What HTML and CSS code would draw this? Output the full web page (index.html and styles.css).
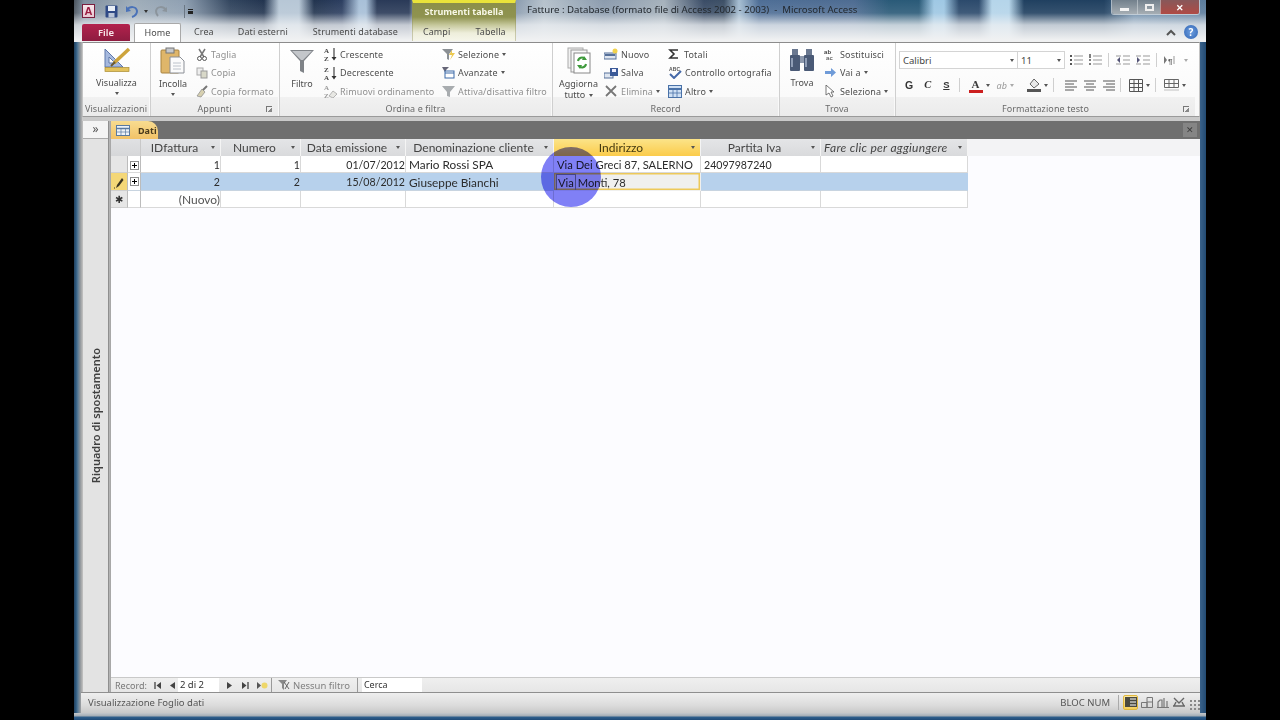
FILE: index.html
```html
<!DOCTYPE html>
<html lang="it">
<head>
<meta charset="utf-8">
<title>Fatture : Database - Microsoft Access</title>
<link rel="stylesheet" href="styles.css">
</head>
<body>
<div class="window">
  <div class="chrome">
    <div class="context-strip"><span class="context-title">Strumenti tabella</span></div>
    <div class="titlebar">
      <div class="qat">
        <span class="app-a">A</span>
        <svg class="qi q-save" width="13" height="13" viewBox="0 0 13 13"><rect x="0.5" y="0.5" width="12" height="12" rx="1" fill="#2f4a86"/><rect x="3" y="1" width="7" height="5" fill="#e8eef6"/><rect x="3.500" y="8" width="6" height="4.500" fill="#b9c4d6"/></svg>
        <svg class="qi q-undo" width="14" height="13" viewBox="0 0 14 13"><path d="M2 5 C5 1 11 1 12 6 C12 9 10 11 7 12" fill="none" stroke="#4a72b8" stroke-width="2"/><path d="M1 1 L1 7 L6 6 Z" fill="#4a72b8"/></svg>
        <span class="q-caret"></span>
        <svg class="qi q-redo" width="14" height="13" viewBox="0 0 14 13"><path d="M12 5 C9 1 3 1 2 6 C2 8 3 10 4 11" fill="none" stroke="#8b949c" stroke-width="2"/><path d="M13 2 L13 7 L8 6 Z" fill="#8b949c"/></svg>
        <span class="q-sep"></span>
        <span class="q-more"></span>
      </div>
      <span class="doc-title">Fatture : Database (formato file di Access 2002 - 2003)&nbsp; -&nbsp; Microsoft Access</span>
      <div class="winbtns">
        <span class="wb wb-min"><i></i></span>
        <span class="wb wb-max"><i></i></span>
        <span class="wb wb-close">✕</span>
      </div>
    </div>
    <div class="tabs">
      <span class="tab-file">File</span>
      <span class="tab tab-home">Home</span>
      <span class="tab t-crea">Crea</span>
      <span class="tab t-est">Dati esterni</span>
      <span class="tab t-str">Strumenti database</span>
      <span class="tab t-cam">Campi</span>
      <span class="tab t-tab">Tabella</span>
      <span class="tab-right">
        <svg width="10" height="7" viewBox="0 0 10 7"><path d="M1 6 L5 2 L9 6" fill="none" stroke="#555" stroke-width="2"/></svg>
        <span class="help">?</span>
      </span>
    </div>
  </div>

  <div class="ribbon">
    <section class="group g-vis">
      <div class="g-body">
        <div class="large lg-vis">
          <svg width="28" height="26" viewBox="0 0 28 26"><path d="M2 2 L2 20 L20 20 Z M6 10 L6 16 L12 16 Z" fill="#a6b9de" fill-rule="evenodd" stroke="#5f78ab"/><path d="M26 2 L11 16" stroke="#cda43c" stroke-width="3.500"/><path d="M12 15 L8 19" stroke="#6b5a30" stroke-width="2"/><rect x="2" y="20.500" width="24" height="4" fill="#e3c25c" stroke="#a98b2f" stroke-width=".7"/></svg>
          <span class="lg-label">Visualizza</span>
          <span class="caret"></span>
        </div>
      </div>
      <div class="g-label">Visualizzazioni</div>
    </section>

    <section class="group g-app">
      <div class="g-body">
        <div class="large lg-inc">
          <svg width="26" height="27" viewBox="0 0 26 27"><rect x="1" y="3" width="18" height="23" rx="1" fill="#dfb66a" stroke="#a88340"/><rect x="6" y="1" width="8" height="5" fill="#c7c9cc" stroke="#777"/><path d="M10 10 H20 L24 14 V26 H10 Z" fill="#fbfbfb" stroke="#8b8f96"/><path d="M13 16 H21 M13 19 H21 M13 22 H21" stroke="#bcc2ca"/></svg>
          <span class="lg-label">Incolla</span>
          <span class="caret"></span>
        </div>
        <div class="col c-app">
          <div class="sm dis"><svg width="12" height="13" viewBox="0 0 12 13"><path d="M3 1 L8 9 M9 1 L4 9" stroke="#777" stroke-width="1.500"/><circle cx="3.500" cy="10.500" r="2" fill="none" stroke="#555"/><circle cx="8.500" cy="10.500" r="2" fill="none" stroke="#555"/></svg><span>Taglia</span></div>
          <div class="sm dis"><svg width="12" height="13" viewBox="0 0 12 13"><rect x="1" y="2" width="6" height="7" fill="#eee" stroke="#aaa"/><rect x="5" y="5" width="6" height="7" fill="#d8d8c8" stroke="#999"/></svg><span>Copia</span></div>
          <div class="sm dis"><svg width="12" height="13" viewBox="0 0 12 13"><path d="M11 1 L6 6" stroke="#777" stroke-width="2"/><path d="M6 4 L9 7 L5 12 L1 11 Z" fill="#d7d0b0" stroke="#888" stroke-width=".7"/></svg><span>Copia formato</span></div>
        </div>
      </div>
      <div class="g-label g-label-launch"><span>Appunti</span><i class="launch"></i></div>
    </section>

    <section class="group g-ord">
      <div class="g-body">
        <div class="large lg-fil">
          <svg width="26" height="26" viewBox="0 0 26 26"><path d="M1 2 H25 L15 13 V25 L11 23 V13 Z" fill="#7f8388"/><path d="M3 3 H23 L14 12 H12 Z" fill="#c3c6ca"/></svg>
          <span class="lg-label">Filtro</span>
        </div>
        <div class="col c-ord1">
          <div class="sm"><svg width="13" height="14" viewBox="0 0 13 14"><text x="0" y="6" class="az">A</text><text x="0" y="13.500" class="az">Z</text><path d="M10 1 V11" stroke="#444" stroke-width="1.200"/><path d="M7.500 10 H12.500 L10 13.500 Z" fill="#333"/></svg><span>Crescente</span></div>
          <div class="sm"><svg width="13" height="14" viewBox="0 0 13 14"><text x="0" y="6" class="az">Z</text><text x="0" y="13.500" class="az">A</text><path d="M10 1 V11" stroke="#444" stroke-width="1.200"/><path d="M7.500 10 H12.500 L10 13.500 Z" fill="#333"/></svg><span>Decrescente</span></div>
          <div class="sm dis"><svg width="13" height="14" viewBox="0 0 13 14"><text x="0" y="6" class="az az-d">A</text><text x="0" y="13.500" class="az az-d">Z</text><path d="M5 12 L9 7 L13 10 L9 14 Z" fill="#e8e8e4" stroke="#999" stroke-width=".7"/></svg><span>Rimuovi ordinamento</span></div>
        </div>
        <div class="col c-ord2">
          <div class="sm"><svg width="13" height="13" viewBox="0 0 13 13"><path d="M0 1 H11 L7 6 V12 L5 11 V6 Z" fill="#8b9094"/><path d="M10 2 L7 7 H10 L8 12 L13 5 H10 Z" fill="#ecc94f"/></svg><span>Selezione</span><b class="dd"></b></div>
          <div class="sm"><svg width="13" height="13" viewBox="0 0 13 13"><path d="M0 1 H7 L4 4 V8 Z" fill="#667"/><rect x="3" y="5" width="9" height="7" fill="#fff" stroke="#3c6aa8"/><path d="M3 7 H12" stroke="#3c6aa8"/></svg><span>Avanzate</span><b class="dd"></b></div>
          <div class="sm dis"><svg width="13" height="13" viewBox="0 0 13 13"><path d="M0 1 H13 L8 7 V12 L5 11 V7 Z" fill="#a8acaf"/></svg><span>Attiva/disattiva filtro</span></div>
        </div>
      </div>
      <div class="g-label">Ordina e filtra</div>
    </section>

    <section class="group g-rec">
      <div class="g-body">
        <div class="large lg-agg">
          <svg width="24" height="28" viewBox="0 0 24 28"><rect x="1" y="1" width="15" height="20" fill="#f1f1f1" stroke="#aaa"/><rect x="4" y="3" width="16" height="22" fill="#f7f7f7" stroke="#999"/><rect x="7" y="6" width="16" height="20" fill="#fff" stroke="#888"/><path d="M11 14 A4 4 0 0 1 18 12 M19 17 A4 4 0 0 1 12 19" fill="none" stroke="#3f9a3c" stroke-width="2"/><path d="M17 9 L20 13 L15 13 Z M13 22 L10 18 L15 18 Z" fill="#3f9a3c"/></svg>
          <span class="lg-label lg-two">Aggiorna<br>tutto <b class="dd dd-in"></b></span>
        </div>
        <div class="col c-rec1">
          <div class="sm"><svg width="14" height="12" viewBox="0 0 14 12"><rect x="0" y="5" width="12" height="6" fill="#dfe6f0" stroke="#56709a"/><path d="M1 7 H11" stroke="#56709a" stroke-width="2"/><circle cx="11" cy="3" r="2.500" fill="#f2d24c"/></svg><span>Nuovo</span></div>
          <div class="sm"><svg width="14" height="12" viewBox="0 0 14 12"><rect x="0" y="6" width="9" height="5" fill="#dfe6f0" stroke="#56709a"/><rect x="6" y="1" width="8" height="8" fill="#3a5a98"/><rect x="8" y="2" width="4" height="3" fill="#eef"/></svg><span>Salva</span></div>
          <div class="sm dis"><svg width="14" height="12" viewBox="0 0 14 12"><path d="M2 1 L12 11 M12 1 L2 11" stroke="#777" stroke-width="1.800"/></svg><span>Elimina</span><b class="dd"></b></div>
        </div>
        <div class="col c-rec2">
          <div class="sm"><svg width="12" height="12" viewBox="0 0 12 12"><path d="M10 2 H2 L6 6 L2 10 H10" fill="none" stroke="#333" stroke-width="1.600"/></svg><span>Totali</span></div>
          <div class="sm"><svg width="14" height="13" viewBox="0 0 14 13"><text x="1" y="5" class="abc">ABC</text><path d="M2 8 L6 12 L13 5" fill="none" stroke="#4468a8" stroke-width="2"/></svg><span>Controllo ortografia</span></div>
          <div class="sm"><svg width="14" height="13" viewBox="0 0 14 13"><rect x="0.500" y="0.500" width="13" height="12" fill="#cfe0f4" stroke="#4a72a8"/><path d="M0 4 H14" stroke="#4a72a8" stroke-width="2"/><path d="M0 8 H14 M5 4 V13 M9 4 V13" stroke="#4a72a8" stroke-width=".8"/></svg><span>Altro</span><b class="dd"></b></div>
        </div>
      </div>
      <div class="g-label">Record</div>
    </section>

    <section class="group g-tro">
      <div class="g-body">
        <div class="large lg-tro">
          <svg width="26" height="26" viewBox="0 0 26 26"><rect x="3" y="2" width="6" height="6" fill="#6a7890"/><rect x="17" y="2" width="6" height="6" fill="#6a7890"/><rect x="1" y="8" width="10" height="16" rx="1" fill="#4a5a76"/><rect x="15" y="8" width="10" height="16" rx="1" fill="#4a5a76"/><rect x="11" y="9" width="4" height="7" fill="#8d99ad"/><path d="M3 11 V20 M17 11 V20" stroke="#a8b5cb" stroke-width="1.500"/></svg>
          <span class="lg-label">Trova</span>
        </div>
        <div class="col c-tro">
          <div class="sm"><svg width="13" height="13" viewBox="0 0 13 13"><text x="0" y="5.500" class="rep">ab</text><text x="2" y="12" class="rep rep2">ac</text></svg><span>Sostituisci</span></div>
          <div class="sm"><svg width="13" height="13" viewBox="0 0 13 13"><path d="M1 5 H7 V2 L12 6.500 L7 11 V8 H1 Z" fill="#6f9bd8"/></svg><span>Vai a</span><b class="dd"></b></div>
          <div class="sm"><svg width="13" height="13" viewBox="0 0 13 13"><path d="M2 0 V10 L5 8 L7 12 L9 11 L7 7 L10 7 Z" fill="#fff" stroke="#555" stroke-width=".8"/></svg><span>Seleziona</span><b class="dd"></b></div>
        </div>
      </div>
      <div class="g-label">Trova</div>
    </section>

    <section class="group g-font">
      <div class="g-body g-font-body">
        <div class="font-row fr1">
          <div class="combo c-name"><span>Calibri</span><b class="dd"></b></div>
          <div class="combo c-size"><span>11</span><b class="dd"></b></div>
          <svg class="fi fi1" width="13" height="12" viewBox="0 0 13 12"><path d="M4 2 H13 M4 6 H13 M4 10 H13" stroke="#999"/><path d="M0 2 H2 M0 6 H2 M0 10 H2" stroke="#555" stroke-width="2"/></svg>
          <svg class="fi" width="13" height="12" viewBox="0 0 13 12"><path d="M4 2 H13 M4 6 H13 M4 10 H13" stroke="#999"/><path d="M1 0 V4 M0 6 H2 M0 10 H2" stroke="#555" stroke-width="1.500"/></svg>
          <i class="vsep vs1"></i>
          <svg class="fi" width="14" height="12" viewBox="0 0 14 12"><path d="M7 2 H14 M7 6 H14 M7 10 H14 M0 2 H5 M0 10 H5" stroke="#999"/><path d="M4 3 L1 6 L4 9 Z" fill="#557"/></svg>
          <svg class="fi" width="14" height="12" viewBox="0 0 14 12"><path d="M7 2 H14 M7 6 H14 M7 10 H14 M0 2 H5 M0 10 H5" stroke="#999"/><path d="M1 3 L4 6 L1 9 Z" fill="#557"/></svg>
          <i class="vsep vs2"></i>
          <svg class="fi" width="12" height="10" viewBox="0 0 12 10"><path d="M0 1 L3 5 L0 9 Z" fill="#777"/><text x="4" y="8.500" class="para">¶</text><path d="M10 1 V9" stroke="#999"/></svg>
          <b class="dd dd-l dd-pil"></b>
        </div>
        <div class="font-row fr2">
          <span class="fmt f-g">G</span>
          <span class="fmt f-c">C</span>
          <span class="fmt f-s">S</span>
          <i class="vsep vs3"></i>
          <span class="fmt-a">A</span>
          <b class="dd"></b>
          <span class="fmt-ab">ab</span>
          <b class="dd dd-l"></b>
          <svg class="fill" width="14" height="14" viewBox="0 0 14 14"><path d="M3 6 L7 1 L12 6 L7 10 Z" fill="#e8e8e8" stroke="#666"/><rect x="0" y="11" width="14" height="3" fill="#555"/></svg>
          <b class="dd"></b>
          <i class="vsep vs4"></i>
          <svg class="al" width="12" height="11" viewBox="0 0 12 11"><path d="M0 1 H12 M0 4 H9 M0 7 H12 M0 10 H9" stroke="#555"/></svg>
          <svg class="al" width="12" height="11" viewBox="0 0 12 11"><path d="M0 1 H12 M2 4 H10 M0 7 H12 M2 10 H10" stroke="#555"/></svg>
          <svg class="al" width="12" height="11" viewBox="0 0 12 11"><path d="M0 1 H12 M3 4 H12 M0 7 H12 M3 10 H12" stroke="#555"/></svg>
          <i class="vsep vs5"></i>
          <svg class="gr" width="14" height="13" viewBox="0 0 14 13"><path d="M.5 .5 H13.500 V12.500 H.5 Z M.5 4.500 H13.500 M.5 8.500 H13.500 M5 .5 V12.500 M9.500 .5 V12.500" fill="none" stroke="#555"/></svg>
          <b class="dd"></b>
          <i class="vsep vs6"></i>
          <svg class="gr gr2" width="15" height="12" viewBox="0 0 15 12"><path d="M.5 .5 H14.500 V8.500 H.5 Z M.5 4.500 H14.500 M5 .5 V8.500 M10 .5 V8.500" fill="none" stroke="#666"/><rect y="10" width="15" height="2" fill="#ddd"/></svg>
          <b class="dd"></b>
        </div>
      </div>
      <div class="g-label g-label-launch"><span>Formattazione testo</span><i class="launch"></i></div>
    </section>
  </div>

  <div class="ribbon-gap"></div>

  <div class="workspace">
    <aside class="navpane">
      <div class="nav-toggle">»</div>
      <div class="nav-body"><span class="nav-text">Riquadro di spostamento</span></div>
    </aside>
    <main class="doc">
      <div class="doc-tabs">
        <div class="doc-tab">
          <svg width="14" height="11" viewBox="0 0 14 11"><rect x=".5" y=".5" width="13" height="10" fill="#eef3f9" stroke="#5a7aa0"/><path d="M0 3.500 H14" stroke="#5a7aa0" stroke-width="1.500"/><path d="M0 7 H14 M5 3 V11 M9.500 3 V11" stroke="#5a7aa0" stroke-width=".7"/></svg>
          <span>Dati</span>
        </div>
        <div class="doc-close">✕</div>
      </div>
      <div class="sheet">
        <table class="grid">
          <colgroup>
            <col class="w17"><col class="w13"><col class="w80"><col class="w80"><col class="w105"><col class="w148"><col class="w147"><col class="w120"><col class="w147">
          </colgroup>
          <thead>
            <tr>
              <th class="corner" colspan="2"></th>
              <th><span>IDfattura</span><b class="dd"></b></th>
              <th><span>Numero</span><b class="dd"></b></th>
              <th><span>Data emissione</span><b class="dd"></b></th>
              <th><span>Denominazione cliente</span><b class="dd"></b></th>
              <th class="th-active"><span>Indirizzo</span><b class="dd"></b></th>
              <th><span>Partita Iva</span><b class="dd"></b></th>
              <th class="th-add"><span>Fare clic per aggiungere</span><b class="dd"></b></th>
            </tr>
          </thead>
          <tbody>
            <tr>
              <td class="sel"></td><td class="exp"><i class="plus"></i></td>
              <td class="num">1</td><td class="num">1</td><td class="num">01/07/2012</td>
              <td class="txt name">Mario Rossi SPA</td><td class="txt addr">Via Dei Greci 87, SALERNO</td><td class="txt digits">24097987240</td><td></td>
            </tr>
            <tr class="current">
              <td class="sel sel-edit"><svg width="10" height="12" viewBox="0 0 10 12"><path d="M8 1 L3 8 L2 11 L5 9 L9.500 3 Z" fill="#3a3320"/><path d="M0 11 H1" stroke="#3a3320"/></svg></td><td class="exp"><i class="plus"></i></td>
              <td class="num">2</td><td class="num">2</td><td class="num">15/08/2012</td>
              <td class="txt name">Giuseppe Bianchi</td><td class="txt addr cell-active"><span class="word">Via</span> Monti, 78</td><td></td><td></td>
            </tr>
            <tr>
              <td class="sel sel-new">✱</td><td class="exp"></td>
              <td class="num new">(Nuovo)</td><td></td><td></td><td></td><td></td><td></td><td></td>
            </tr>
          </tbody>
        </table>
      </div>
      <div class="recnav">
        <span class="rn-label">Record:</span>
        <svg class="rn-btn rn-first" width="7" height="7" viewBox="0 0 7 7"><path d="M1 0 V7" stroke="#444" stroke-width="1.300"/><path d="M7 0 V7 L2.500 3.500 Z" fill="#444"/></svg>
        <svg class="rn-btn rn-prev" width="5" height="7" viewBox="0 0 5 7"><path d="M5 0 V7 L0 3.500 Z" fill="#444"/></svg>
        <span class="rn-input">2 di 2</span>
        <svg class="rn-btn rn-next" width="5" height="7" viewBox="0 0 5 7"><path d="M0 0 V7 L5 3.500 Z" fill="#444"/></svg>
        <svg class="rn-btn rn-last" width="7" height="7" viewBox="0 0 7 7"><path d="M6 0 V7" stroke="#444" stroke-width="1.300"/><path d="M0 0 V7 L4.500 3.500 Z" fill="#444"/></svg>
        <svg class="rn-btn rn-new" width="11" height="9" viewBox="0 0 11 9"><path d="M0 1 V8 L4 4.500 Z" fill="#555"/><circle cx="7.500" cy="4.500" r="3" fill="#eed76a"/></svg>
        <i class="rn-sep s1"></i>
        <svg class="rn-fil" width="12" height="12" viewBox="0 0 12 12"><path d="M0 1 H9 L6 5 V11 L4 9 V5 Z" fill="#888"/><path d="M6 3 L11 10 M11 3 L7 10" stroke="#666"/></svg>
        <span class="rn-filter">Nessun filtro</span>
        <i class="rn-sep s2"></i>
        <span class="rn-search">Cerca</span>
      </div>
    </main>
  </div>

  <div class="statusbar">
    <span class="st-left">Visualizzazione Foglio dati</span>
    <span class="st-num">BLOC NUM</span>
    <i class="st-sep"></i>
    <span class="view view-on"><svg width="12" height="10" viewBox="0 0 12 10"><rect width="12" height="10" fill="#4a4a40"/><path d="M5 2 H11 M5 5 H11 M5 8 H11" stroke="#fff"/></svg></span>
    <span class="view"><svg width="12" height="11" viewBox="0 0 12 11"><path d="M.5 5.500 H6 V10.500 H.5 Z M6 .5 H11.500 V10.500 H6 Z M6 5 H11.500" fill="none" stroke="#777"/></svg></span>
    <span class="view"><svg width="12" height="11" viewBox="0 0 12 11"><path d="M1 10 V5 L3 3 H5 V10 M7 10 V1 M10 10 V4 M0 10.500 H12" fill="none" stroke="#777" stroke-width="1.200"/></svg></span>
    <span class="view"><svg width="12" height="11" viewBox="0 0 12 11"><path d="M1 1 L6 6 L11 1 M0 9 H12 M3 5 L1 9 M9 5 L11 9" fill="none" stroke="#666" stroke-width="1.400"/></svg></span>
    <span class="grip"></span>
  </div>

  <div class="highlight"></div>
</div>
</body>
</html>
```

FILE: styles.css
```css
* { box-sizing: border-box; }
html, body { margin: 0; height: 720px; overflow: hidden; background: #000; }
body {
  display: flex;
  justify-content: center;
  font-family: "Noto Sans", "Liberation Sans", sans-serif;
  font-size: 9px;
  color: #555;
}
i, b { display: block; font-style: normal; }

.window {
  position: relative;
  width: 1132px;
  height: 720px;
  padding: 0 6px 7px 8px;
  display: flex;
  flex-direction: column;
  background:
    linear-gradient(#c4c8cc, #a4acb4 3px, #2f5f8c 4px, #1e4a78) bottom / 100% 7px no-repeat,
    linear-gradient(90deg, #23405c 0, #2d5a80 2px, #5d7d97 4px, #8d949a 6px, #b3b3b3 8px, #b3b3b3 1124px, #3a628a 1126px, #224a72 1132px);
  filter: blur(.35px);
}

.chrome {
  position: relative;
  margin: 0 -6px 0 -8px;
  padding: 0 6px 0 8px;
  height: 42px;
  flex: none;
  background:
    linear-gradient(180deg, rgba(236,239,242,0) 0, rgba(236,239,242,.1) 13px, rgba(236,239,242,.8) 25px, #f0f1f2 40px),
    linear-gradient(90deg, #49525c 0, #7f8f9f 10px, #9fadb9 60px, #8fa0b2 110px, #33465f 156px, #22344f 190px, #b7c7d6 205px, #b7c7d6 225px, #22344f 240px, #2c3e60 268px, #a8c0d8 285px, #a8c0d8 292px, #2a3a58 303px, #2a3a58 335px, #7f92a8 340px, #8b9caf 442px, #b6c2cc 470px, #8c9cae 530px, #a6b2bc 590px, #3a4c66 630px, #3d5066 650px, #a6bed2 665px, #4e6e96 685px, #4e6c92 780px, #2a5a78 815px, #2a5a78 845px, #9fc8e4 860px, #9fc8e4 870px, #2c4a6c 885px, #2c4a6c 905px, #b5d5ea 918px, #b5d5ea 935px, #204060 950px, #204060 1030px, #6a8aa8 1060px, #5c7c9c 1132px);
}
.context-strip {
  position: absolute;
  left: 338px;
  top: 0;
  width: 104px;
  height: 41px;
  border-top: 3px solid #eae33a;
  border-left: 1px solid rgba(140,140,90,.4);
  border-right: 1px solid rgba(140,140,90,.4);
  background: linear-gradient(180deg, #8b8f49 0, #8f9350 14px, #c6c89c 22px, #eeeedb 30px, #f6f6ea 38px);
  text-align: center;
}
.context-title {
  display: block;
  padding-top: 2px;
  font-size: 9px;
  font-weight: 700;
  line-height: 14px;
  color: #f7f7e6;
}

.titlebar {
  position: relative;
  height: 22px;
  display: flex;
  align-items: flex-start;
}
.qat {
  width: 445px;
  height: 22px;
  display: flex;
  align-items: center;
  flex: none;
}
.app-a {
  width: 13px;
  height: 14px;
  margin-top: -1px;
  background: linear-gradient(#f6e6ea, #e8c7d2);
  border: 1px solid #7b1d3e;
  color: #9b1c40;
  font: 700 11px/12px "Liberation Sans", sans-serif;
  text-align: center;
}
.q-save { margin-left: 10px; }
.q-undo { margin-left: 7px; }
.q-caret { width: 0; height: 0; margin-left: 5px; border: 2px solid transparent; border-top: 3px solid #333; border-bottom: 0; }
.q-redo { margin-left: 6px; }
.q-sep { width: 1px; height: 13px; margin-left: 16px; background: #6b7784; }
.q-more { width: 5px; height: 5px; margin-left: 3px; border-top: 1px solid #222; border-bottom: 3px solid #222; }
.doc-title {
  flex: none;
  width: 500px;
  padding-top: 3px;
  font-size: 9.650px;
  line-height: 14px;
  color: #23292f;
  white-space: nowrap;
}
.winbtns {
  margin-left: auto;
  display: flex;
  height: 15px;
  border: 1px solid rgba(220,225,230,.7);
  border-top: 0;
  border-radius: 0 0 3px 3px;
  overflow: hidden;
}
.wb { display: flex; align-items: center; justify-content: center; height: 14px; }
.wb-min { width: 25px; background: linear-gradient(#72808c, #a6aeb4); }
.wb-min i { width: 9px; height: 3px; margin-top: 5px; background: #f4f4f4; }
.wb-max { width: 23px; background: linear-gradient(#72808c, #a6aeb4); border-left: 1px solid rgba(220,225,230,.5); }
.wb-max i { width: 9px; height: 7px; border: 2px solid #eee; }
.wb-close { width: 39px; background: linear-gradient(#87585a, #b04a44); border-left: 1px solid rgba(220,225,230,.5); color: #fff; font-size: 9px; font-weight: 700; }

.tabs {
  position: relative;
  height: 20px;
  display: flex;
  align-items: flex-end;
}
.tab-file {
  width: 48px;
  height: 17px;
  margin-bottom: 1px;
  border-radius: 2px 2px 0 0;
  background: linear-gradient(#b3224d, #8e1c40);
  color: #f7e6ea;
  font-size: 9.500px;
  font-weight: 600;
  line-height: 17px;
  text-align: center;
}
.tab {
  height: 20px;
  line-height: 20px;
  color: #4a4a4a;
  white-space: nowrap;
  letter-spacing: .1px;
}
.tab-home {
  width: 47px;
  margin-left: 4px;
  position: relative;
  top: 1px;
  background: #fff;
  border: 1px solid #a9a9a9;
  border-bottom: 0;
  border-radius: 2px 2px 0 0;
  text-align: center;
  line-height: 18px;
}
.t-crea { margin-left: 13px; }
.t-est { margin-left: 24px; }
.t-str { margin-left: 25px; }
.t-cam { margin-left: 25px; }
.t-tab { margin-left: 25px; }
.tab-right {
  margin-left: auto;
  margin-right: 2px;
  height: 20px;
  display: flex;
  align-items: center;
  gap: 8px;
}
.help {
  width: 14px;
  height: 14px;
  border-radius: 50%;
  background: radial-gradient(#6d9fe0, #2f63b3);
  color: #fff;
  font-size: 10px;
  font-weight: 700;
  line-height: 14px;
  text-align: center;
}

.ribbon {
  position: relative;
  flex: none;
  height: 75px;
  display: flex;
  background: linear-gradient(#fff, #f8f8f8);
  border-top: 1px solid #8c8c8c;
  border-bottom: 1px solid #9a9a9a;
  border-right: 1px solid #c4c4c4;
  border-left: 1px solid #c4c4c4;
}
.group {
  display: flex;
  flex-direction: column;
  flex: none;
  border-right: 1px solid #cfcfcf;
}
.g-vis { width: 68px; }
.g-app { width: 129px; }
.g-ord { width: 273px; }
.g-rec { width: 227px; }
.g-tro { width: 116px; }
.g-font { width: 300px; border-right: 0; }
.g-body { position: relative; z-index: 1; height: 54px; display: flex; }
.g-label {
  height: 19px;
  margin: 0 1px 0 0;
  background: linear-gradient(#f1f1f1, #ebebeb);
  color: #6a6a6a;
  font-size: 9px;
  line-height: 23px;
  text-align: center;
  white-space: nowrap;
  position: relative;
  letter-spacing: .1px;
}
.launch {
  position: absolute;
  right: 6px;
  top: 9px;
  width: 6px;
  height: 6px;
  border-top: 1px solid #777;
  border-left: 1px solid #777;
  background: linear-gradient(135deg, transparent 55%, #888 55%);
}
.large {
  display: flex;
  flex-direction: column;
  align-items: center;
  padding-top: 4px;
  flex: none;
}
.lg-vis { width: 67px; }
.lg-inc { width: 44px; }
.lg-fil { width: 44px; padding-top: 5px; }
.lg-agg { width: 51px; padding-top: 4px; }
.lg-tro { width: 44px; }
.lg-label { margin-top: 3px; color: #4a4a4a; line-height: 13px; white-space: nowrap; }
.lg-two { margin-top: 3px; line-height: 11px; text-align: center; }
.lg-agg svg { flex: none; }
.caret { width: 0; height: 0; margin-top: 3px; border: 2.500px solid transparent; border-top: 3px solid #555; border-bottom: 0; }

.col { display: flex; flex-direction: column; padding-top: 2px; flex: none; }
.sm { flex: none; height: 18.500px; display: flex; align-items: center; gap: 3px; white-space: nowrap; color: #4d4d4d; letter-spacing: .15px; }
.dis { color: #8f8f8f; }
.dd {
  flex: none;
  width: 0;
  height: 0;
  margin-left: 3px;
  border: 2.500px solid transparent;
  border-top: 3px solid #555;
  border-bottom: 0;
}
.sm .dd { margin-left: 0; }
.dd-in { display: inline-block; vertical-align: middle; margin-left: 1px; }
.dd-l { border-top-color: #aaa; }
.dd-pil { margin-left: 8px; }
.c-app { margin-left: 1px; }
.c-ord1 { width: 118px; }
.c-rec1 { width: 64px; }
.c-rec2 .sm:first-child { gap: 4px; }
.az { font: 700 7px "Liberation Serif", serif; fill: #444; }
.az-d { fill: #999; }
.abc { font: 700 5px "Liberation Sans", sans-serif; fill: #555; }
.rep { font: 700 6px "Liberation Sans", sans-serif; fill: #444; }
.rep2 { fill: #666; }
.para { font: 700 8px "Liberation Sans", sans-serif; fill: #666; }

.g-font-body { flex-direction: column; padding: 8px 0 0 3px; }
.font-row { display: flex; align-items: center; }
.fr1 { height: 18px; }
.fr2 { height: 18px; margin-top: 7px; padding-left: 6px; }
.combo {
  height: 18px;
  display: flex;
  align-items: center;
  justify-content: space-between;
  padding: 0 3px;
  background: #fff;
  border: 1px solid #d4d4d4;
  font-size: 9.500px;
  color: #444;
}
.c-name { width: 119px; }
.c-size { width: 48px; margin-left: -1px; margin-right: 5px; }
.fi { margin-left: 6px; flex: none; }
.fi1 { margin-left: 0; }
.vsep { width: 1px; height: 14px; background: #cfcfcf; flex: none; }
.vs1 { margin: 0 1px 0 6px; }
.vs2 { margin: 0 1px 0 6px; }
.vs3 { margin: 0 9px 0 9px; }
.vs4 { margin: 0 4px 0 5px; }
.vs5 { margin: 0 8px 0 5px; }
.vs6 { margin: 0 8px 0 5px; }
.fmt { font: 700 10.500px/14px "Liberation Sans", sans-serif; color: #333; }
.f-c { font-style: italic; font-family: "Liberation Serif", serif; margin-left: 11px; }
.f-s { margin-left: 12px; text-decoration: underline; font-size: 9.500px; }
.fmt-a {
  width: 14px;
  font: 700 11px/12px "Liberation Serif", serif;
  color: #3a3a3a;
  text-align: center;
  border-bottom: 3px solid #cc1f1f;
}
.fmt-ab { margin-left: 7px; font-size: 9px; color: #999; font-style: italic; }
.fill { margin-left: 13px; }
.al { margin-left: 7px; flex: none; }
.gr { flex: none; }

.ribbon-gap { height: 4px; flex: none; background: #c9c9c9; }

.workspace { flex: 1; min-height: 0; display: flex; }
.navpane {
  width: 27px;
  flex: none;
  margin-right: 1px;
  display: flex;
  flex-direction: column;
  background: #e3e3e3;
  border-right: 1px solid #8f8f8f;
  border-left: 1px solid #bcbcbc;
}
.nav-toggle {
  height: 18px;
  flex: none;
  background: #f4f4f4;
  border-bottom: 1px solid #aaa;
  color: #555;
  font-size: 12px;
  line-height: 15px;
  text-align: center;
}
.nav-body { flex: 1; display: flex; align-items: center; justify-content: center; }
.nav-text {
  writing-mode: vertical-rl;
  transform: rotate(180deg);
  font-size: 11px;
  font-weight: 600;
  color: #3f3f3f;
  white-space: nowrap;
}

.doc { flex: 1; min-width: 0; display: flex; flex-direction: column; border-left: 1px solid #a8a8a8; background: #fdfdff; }
.doc-tabs {
  height: 18px;
  flex: none;
  display: flex;
  align-items: stretch;
  background: #6f6f6f;
  justify-content: space-between;
}
.doc-tab {
  width: 47px;
  display: flex;
  align-items: center;
  gap: 8px;
  padding-left: 5px;
  border-radius: 0 10px 0 0;
  background: linear-gradient(#f8dc90, #f2c267);
  color: #4a3a1c;
  font-size: 9px;
  font-weight: 700;
}
.doc-close {
  width: 14px;
  margin: 2px 3px 2px 0;
  background: #858585;
  color: #3c3c3c;
  font-size: 9px;
  line-height: 14px;
  text-align: center;
}
.sheet {
  flex: 1;
  min-height: 0;
  background: linear-gradient(#f3f3f5 0, #f3f3f5 17px, #fcfcff 17px);
}
.grid {
  table-layout: fixed;
  width: 857px;
  border-collapse: separate;
  border-spacing: 0;
  font-family: Lato, "Liberation Sans", sans-serif;
  font-size: 11px;
  color: #333;
}
.w17 { width: 17px; }
.w13 { width: 13px; }
.w80 { width: 80px; }
.w105 { width: 105px; }
.w148 { width: 148px; }
.w147 { width: 147px; }
.w120 { width: 120px; }
.grid tr { height: 17px; }
.grid tr.current { height: 18px; }
.grid th {
  height: 17px;
  padding: 0 3px;
  background: linear-gradient(#e4e5e7, #d9dadc);
  border-right: 1px solid #f4f4f4;
  font-size: 12px;
  font-weight: 400;
  color: #444;
  white-space: nowrap;
  position: relative;
}
.grid th span { display: block; text-align: center; padding-right: 12px; }
.grid th .dd { position: absolute; right: 5px; top: 7px; }
.grid th.corner { background: linear-gradient(#e0e1e3, #d6d7d9); border-right: 1px solid #c8c8c8; }
.grid th.th-active { background: linear-gradient(#fbe489, #fbcb4a); color: #443a10; }
.grid th.th-add span { font-style: italic; text-align: left; letter-spacing: .3px; padding-right: 0; }
.grid td {
  height: 17px;
  padding: 1px 2px 0;
  background: #fff;
  border-right: 1px solid #d9d9d9;
  border-bottom: 1px solid #d9d9d9;
  white-space: nowrap;
  overflow: hidden;
  line-height: 15px;
  color: #2c2c2c;
}
.grid tbody tr:first-child td { padding-top: 2px; line-height: 14px; }
.grid td.num { text-align: right; padding-right: 0; font-size: 10.600px; }
.grid td.txt { padding-left: 3px; }
.grid td.name { font-size: 11.800px; }
.grid td.addr { font-size: 11.200px; }
.grid td.digits { font-size: 10.600px; }
.grid td.new { color: #555; font-size: 12px; }
.grid td.sel {
  padding: 0;
  background: #e6e6e6;
  border-right: 1px solid #bcbcbc;
  border-bottom: 1px solid #cfcfcf;
  text-align: center;
}
.grid td.sel-edit { background: #f4d777; line-height: 14px; }
.grid td.sel-edit svg { vertical-align: middle; }
.grid td.sel-new { font-size: 10px; color: #333; }
.grid td.exp { padding: 0; border-right: 1px solid #bcbcbc; }
.current td { background: #b7d1ec; border-right-color: #b7d1ec; border-bottom-color: #c8d4e0; }
.current td.exp { background: #fff; }
.grid tr.current td.cell-active {
  background: #f0f0ee;
  border-right-color: transparent;
  border-bottom-color: transparent;
  box-shadow: inset 0 0 0 1.500px #edc95a;
  padding-left: 3px;
}
.word { display: inline-block; padding: 0 1px; outline: 1px solid #8a8a8a; }
.plus {
  display: block;
  position: relative;
  width: 9px;
  height: 9px;
  margin: 0 auto;
  background: linear-gradient(#000, #000) center / 5px 1px no-repeat, linear-gradient(#000, #000) center / 1px 5px no-repeat, #fff;
  border: 1px solid #8f8f8f;
}
.recnav {
  flex: none;
  height: 15px;
  display: flex;
  align-items: center;
  background: linear-gradient(#efefef, #e6e6e6);
  border-top: 1px solid #c9c9c9;
  color: #777;
  font-size: 9px;
}
.rn-label { margin-left: 4px; }
.rn-first { margin-left: 7px; }
.rn-prev { margin-left: 9px; }
.rn-input { width: 41px; margin-left: 3px; height: 14px; padding-left: 2px; background: #fff; color: #333; font-size: 9.500px; line-height: 14px; }
.rn-next { margin-left: 8px; }
.rn-last { margin-left: 10px; }
.rn-new { margin-left: 8px; }
.rn-sep { width: 1px; height: 14px; background: #9a9a9a; }
.s1 { margin-left: 3px; }
.rn-fil { margin-left: 6px; margin-right: 3px; }
.rn-filter { font-size: 9.500px; color: #808080; }
.s2 { margin-left: 7px; }
.rn-search { width: 60px; height: 14px; margin-left: 4px; padding-left: 2px; background: #fff; color: #333; line-height: 14px; }

.statusbar {
  flex: none;
  height: 21px;
  display: flex;
  align-items: center;
  padding-left: 7px;
  padding-bottom: 2px;
  margin-left: -1px;
  background: linear-gradient(#efefef, #dcdcdc 60%, #c8c8c8);
  border-top: 1px solid #8f8f8f;
  color: #555;
  font-size: 9.500px;
}
.st-num { margin-left: auto; }
.st-sep { width: 1px; height: 15px; margin-left: 8px; background: #aaa; }
.view { width: 15px; height: 15px; display: flex; align-items: center; justify-content: center; margin-left: 1px; }
.view-on { margin-left: 4px; background: linear-gradient(#fbe7a0, #f5cf5b); border: 1px solid #e0b83e; border-radius: 2px; }
.grip { width: 11px; height: 12px; margin-top: 6px; margin-left: 3px; background: radial-gradient(circle, #888 1px, transparent 1.100px) 0 0 / 4px 4px; }

.highlight {
  position: absolute;
  left: 467px;
  top: 147px;
  width: 60px;
  height: 60px;
  border-radius: 50%;
  background: #8080f6;
  mix-blend-mode: multiply;
}
```
